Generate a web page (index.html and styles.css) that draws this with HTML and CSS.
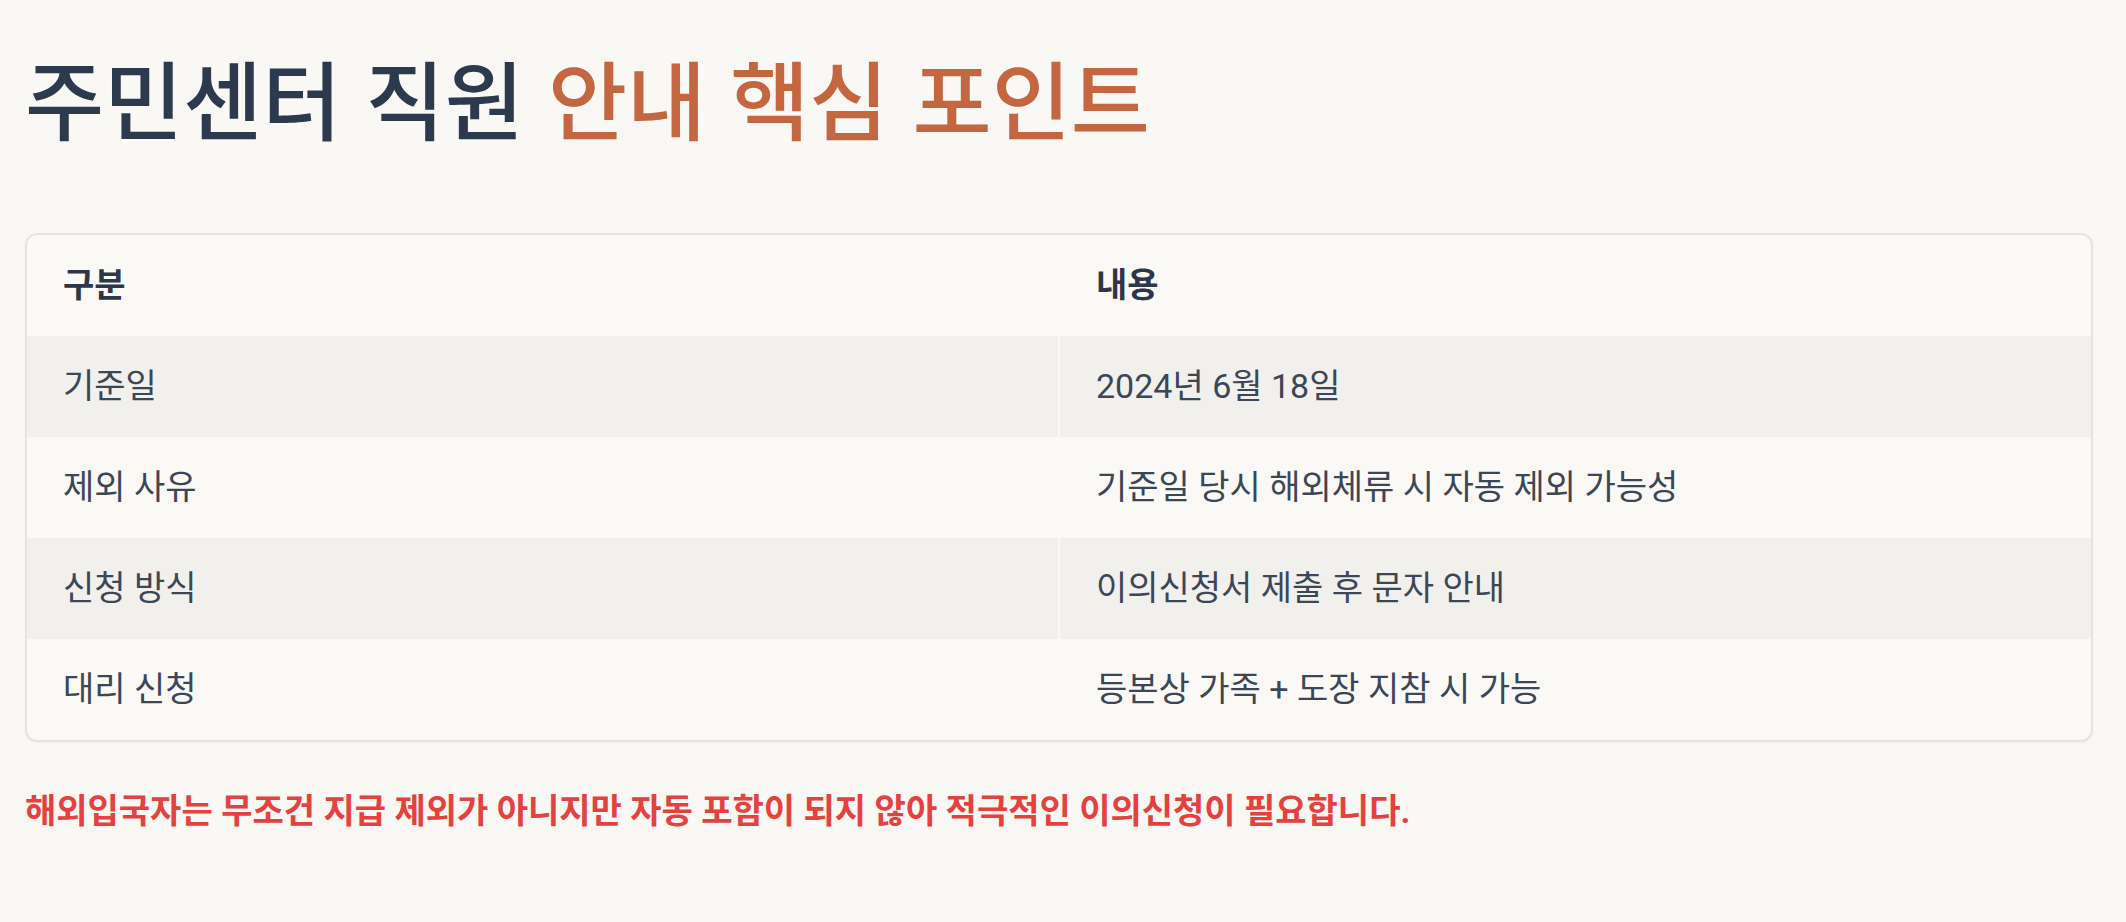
FILE: index.html
```html
<!DOCTYPE html>
<html lang="ko">
<head>
<meta charset="utf-8">
<title>주민센터 직원 안내 핵심 포인트</title>
<link rel="stylesheet" href="styles.css">
</head>
<body>
<main class="page">
  <h1 class="title">주민센터 직원 <span class="accent">안내 핵심 포인트</span></h1>
  <div class="table-card">
    <table class="info-table">
      <thead>
        <tr><th>구분</th><th>내용</th></tr>
      </thead>
      <tbody>
        <tr class="shade"><td>기준일</td><td>2024년 6월 18일</td></tr>
        <tr><td>제외 사유</td><td>기준일 당시 해외체류 시 자동 제외 가능성</td></tr>
        <tr class="shade"><td>신청 방식</td><td>이의신청서 제출 후 문자 안내</td></tr>
        <tr><td>대리 신청</td><td>등본상 가족 + 도장 지참 시 가능</td></tr>
      </tbody>
    </table>
  </div>
  <p class="note">해외입국자는 무조건 지급 제외가 아니지만 자동 포함이 되지 않아 적극적인 이의신청이 필요합니다.</p>
</main>
</body>
</html>
```
FILE: styles.css
```css
html, body {
  margin: 0;
  padding: 0;
  background: #f9f8f5;
}

body {
  font-family: Roboto, "Noto Sans CJK KR", sans-serif;
  color: #334155;
}

.page {
  padding: 0 33px 0 25px;
}

.title {
  margin: 45px 0 84px 0;
  font-family: "Noto Sans CJK KR", sans-serif;
  font-size: 86px;
  line-height: 104px;
  font-weight: 500;
  letter-spacing: 0;
  color: #2d3a4e;
}

.accent {
  color: #c4663f;
}

.table-card {
  border: 2px solid #e6e4df;
  border-radius: 12px;
  overflow: hidden;
  background: #faf9f6;
  box-shadow: 0 1px 2px rgba(0, 0, 0, 0.04);
}

.info-table {
  width: 100%;
  border-collapse: collapse;
  table-layout: fixed;
}

.info-table th,
.info-table td {
  padding: 25px 36px;
  font-size: 34px;
  line-height: 51px;
  text-align: left;
}

.info-table th {
  font-weight: 700;
  color: #2d3748;
}

.info-table td {
  font-weight: 400;
  color: #3b4656;
}

.info-table td + td,
.info-table th + th {
  border-left: 2px solid #faf9f6;
}

.info-table tr.shade td {
  background: #f1f0ec;
}

.note {
  margin: 45px 0 0 0;
  font-family: Roboto, "Noto Sans CJK KR", sans-serif;
  font-size: 34px;
  line-height: 48px;
  font-weight: 700;
  color: #e5413f;
}
```
